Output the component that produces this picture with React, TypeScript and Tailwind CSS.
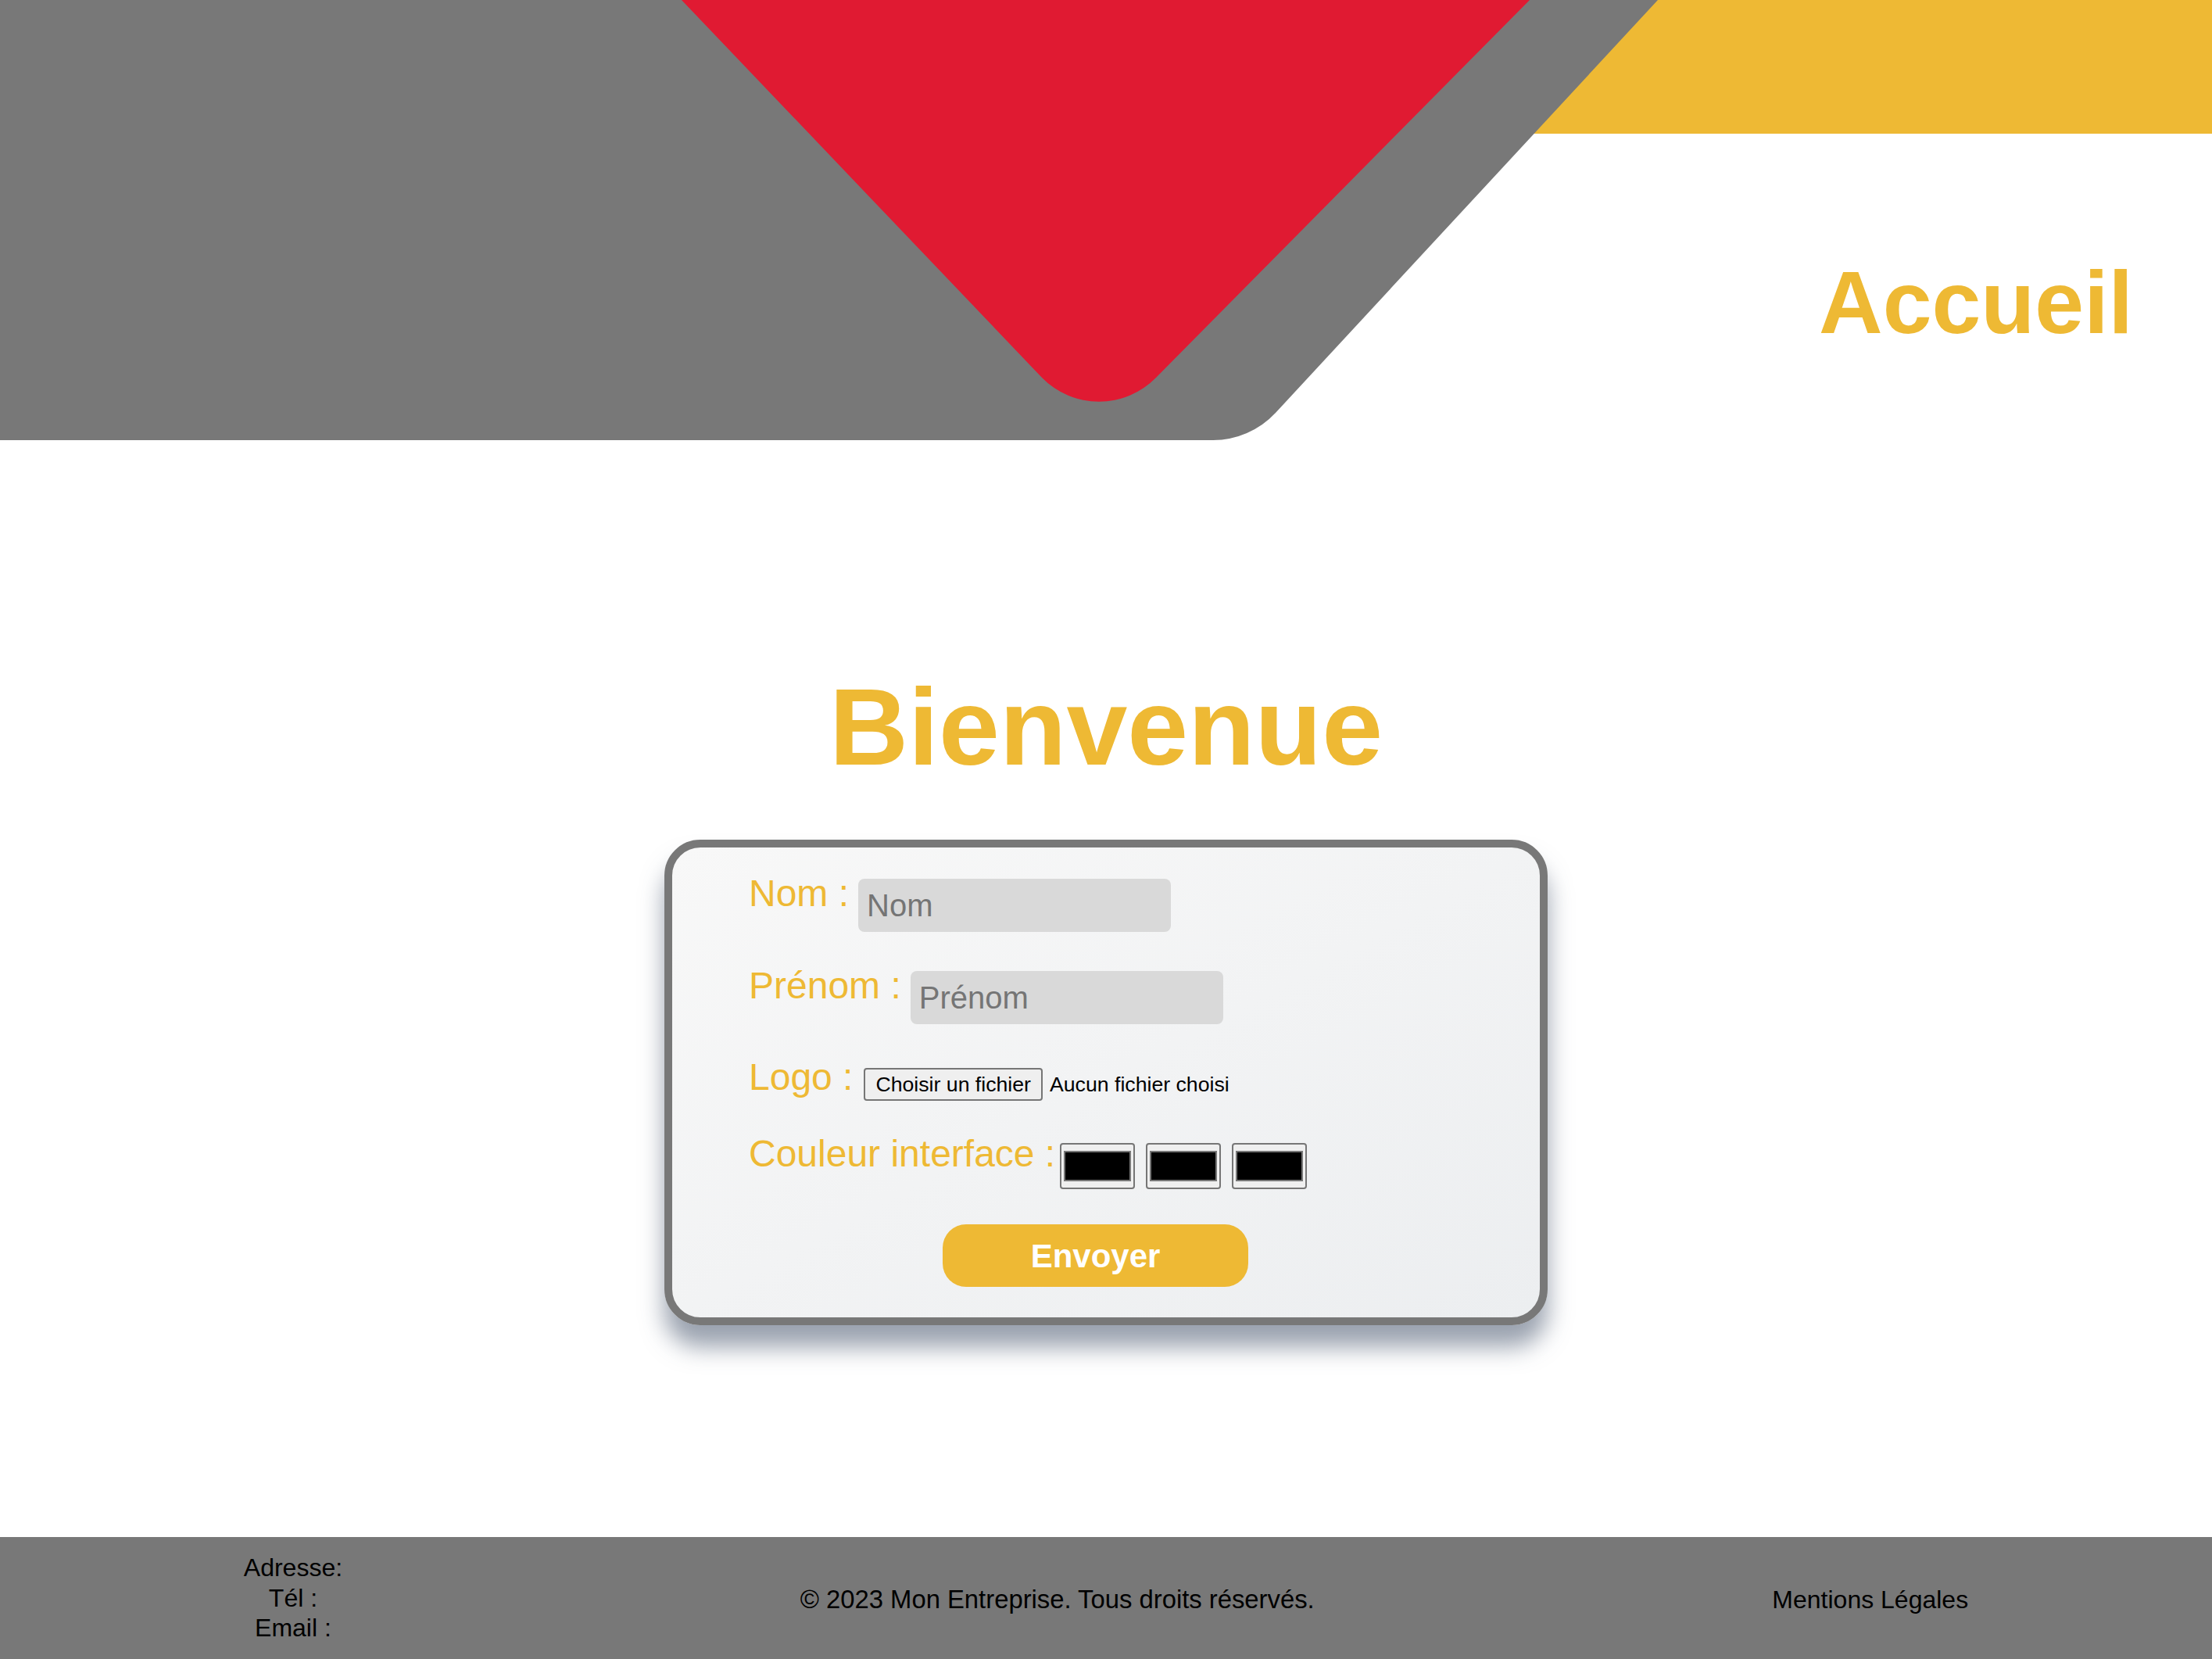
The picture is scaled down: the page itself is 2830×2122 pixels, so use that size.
import type { ReactNode } from 'react'

const yellow = '#EEB934'

function HeaderShapes() {
  return (
    <svg
      className="absolute inset-0 block h-full w-full"
      viewBox="0 0 2830 563"
      preserveAspectRatio="none"
    >
      <rect x="1900" y="0" width="930" height="171" fill={yellow} />
      <path
        d="M0 0 L2121 0 L1632 528 A110 110 0 0 1 1551 563 L0 563 Z"
        fill="#787878"
      />
      <path
        d="M872 0 L1957 0 L1479 483 A102 102 0 0 1 1333 483 Z"
        fill="#E01A32"
      />
    </svg>
  )
}

function Row({ label, className, children }: { label: string; className?: string; children: ReactNode }) {
  return (
    <div className={`flex items-start ${className ?? ''}`}>
      <label className="text-[48px] leading-none whitespace-nowrap text-[#EEB934]">{label}</label>
      {children}
    </div>
  )
}

function ColorSwatch() {
  return (
    <div className="flex h-[59px] w-[96px] items-center justify-center rounded-[4px] border-2 border-[#767676] bg-[#efefef] px-[3px]">
      <div className="h-[39px] w-full border-2 border-[#777] bg-black" />
    </div>
  )
}

export default function App() {
  return (
    <div className="flex min-h-screen flex-col bg-white font-['Liberation_Sans',Arial,sans-serif] text-black">
      <header className="relative h-[563px] w-full">
        <HeaderShapes />
        <div className="relative flex justify-end pt-[331px] pr-[101px]">
          <h2 className="text-[113px] leading-none font-bold text-[#EEB934]">Accueil</h2>
        </div>
      </header>

      <main className="flex flex-col items-center">
        <h1 className="mt-[297px] text-[140px] leading-none font-bold text-[#EEB934]">Bienvenue</h1>

        <form
          className="mt-[74px] flex w-[1130px] flex-col rounded-[46px] border-[10px] border-[#787878] bg-linear-to-br from-[#f8f8f8] to-[#eceef0] pt-[35px] pb-[39px] pl-[98px] shadow-[0_28px_30px_rgba(71,85,110,0.55)]"
          onSubmit={(e) => e.preventDefault()}
        >
          <Row label="Nom :">
            <input
              placeholder="Nom"
              className="mt-[5px] ml-[12px] h-[68px] w-[400px] rounded-[8px] bg-[#d9d9d9] pl-[11px] text-[40px] outline-none placeholder:text-[#757575]"
            />
          </Row>
          <Row label="Prénom :" className="mt-[45px]">
            <input
              placeholder="Prénom"
              className="mt-[5px] ml-[12px] h-[68px] w-[400px] rounded-[8px] bg-[#d9d9d9] pl-[11px] text-[40px] outline-none placeholder:text-[#757575]"
            />
          </Row>
          <Row label="Logo :" className="mt-[44px]">
            <div className="mt-[12px] ml-[14px] flex items-center gap-[9px] text-[26.67px] leading-none">
              <span className="flex h-[42px] items-center rounded-[4px] border-2 border-[#767676] bg-[#efefef] px-[13px]">
                Choisir un fichier
              </span>
              <span>Aucun fichier choisi</span>
            </div>
          </Row>
          <Row label="Couleur interface :" className="mt-[44px]">
            <div className="mt-[10px] ml-[6px] flex gap-[14px]">
              <ColorSwatch />
              <ColorSwatch />
              <ColorSwatch />
            </div>
          </Row>
          <button
            type="submit"
            className="mt-[45px] ml-[248px] flex h-[80px] w-[391px] items-center justify-center rounded-[30px] bg-[#EEB934] text-[42px] font-bold text-white"
          >
            Envoyer
          </button>
        </form>
      </main>

      <footer className="mt-auto flex h-[156px] items-center justify-around bg-[#787878] text-[32px] leading-[38.5px] text-black">
        <div className="flex flex-col items-center px-[38px]">
          <span>Adresse:</span>
          <span>Tél :</span>
          <span>Email :</span>
        </div>
        <p className="mt-[4px] text-[32.8px]">© 2023 Mon Entreprise. Tous droits réservés.</p>
        <div className="mt-[4px] px-[38px]">Mentions Légales</div>
      </footer>
    </div>
  )
}
